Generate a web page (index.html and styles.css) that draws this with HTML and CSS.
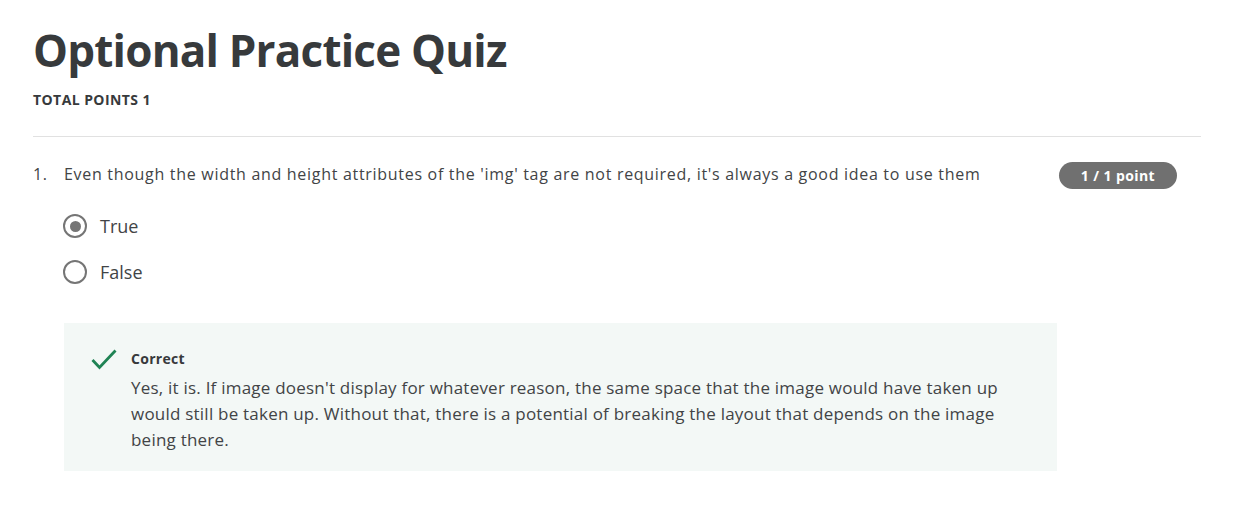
FILE: index.html
```html
<!DOCTYPE html>
<html>
<head>
<meta charset="utf-8">
<link rel="stylesheet" href="styles.css">
</head>
<body>
<main class="page">
  <h1 class="title">Optional Practice Quiz</h1>
  <div class="total">TOTAL POINTS 1</div>
  <hr class="divider">
  <section class="question">
    <div class="q-head">
      <span class="q-num">1.</span>
      <span class="q-text">Even though the width and height attributes of the 'img' tag are not required, it's always a good idea to use them</span>
      <span class="badge">1 / 1 point</span>
    </div>
    <div class="options">
      <label class="option"><span class="radio checked"></span><span class="opt-label">True</span></label>
      <label class="option"><span class="radio"></span><span class="opt-label">False</span></label>
    </div>
    <div class="feedback">
      <svg class="check" width="26" height="21" viewBox="0 0 26 21"><path d="M1.5 11 L8.5 18.5 L24.5 1.5" fill="none" stroke="#1f8354" stroke-width="2.8"/></svg>
      <div class="fb-body">
        <div class="fb-title">Correct</div>
        <p class="fb-text">Yes, it is. If image doesn't display for whatever reason, the same space that the image would have taken up would still be taken up. Without that, there is a potential of breaking the layout that depends on the image being there.</p>
      </div>
    </div>
  </section>
</main>
</body>
</html>
```
FILE: styles.css
```css
* { box-sizing: border-box; }
body {
  margin: 0;
  background: #fff;
  font-family: "Open Sans", "Liberation Sans", sans-serif;
  color: #424446;
}
.page {
  padding: 20px 51px 0 33px;
}
.title {
  margin: 0;
  font-size: 44px;
  font-weight: 700;
  line-height: 60px;
  letter-spacing: -0.8px;
  color: #373a3c;
}
.total {
  margin-top: 10px;
  font-size: 14px;
  font-weight: 700;
  line-height: 20px;
  letter-spacing: 0.43px;
  color: #373a3c;
}
.divider {
  margin: 26px 0 0 0;
  border: 0;
  border-top: 1px solid #e1e1e1;
}
.question {
  padding-top: 25px;
}
.q-head {
  display: flex;
  align-items: flex-start;
  font-size: 16px;
  line-height: 24px;
  letter-spacing: 0.7px;
}
.q-num {
  width: 31px;
  flex: none;
}
.q-text {
  flex: 1;
}
.badge {
  flex: none;
  margin: 0 24px 0 40px;
  background: #707070;
  color: #fff;
  font-size: 14px;
  font-weight: 700;
  line-height: 27px;
  height: 27px;
  padding: 0 22px;
  letter-spacing: 0.4px;
  border-radius: 14px;
}
.options {
  display: flex;
  flex-direction: column;
  gap: 22px;
  margin: 25px 0 0 30px;
}
.option {
  display: flex;
  align-items: center;
  gap: 13px;
  font-size: 18px;
  line-height: 24px;
}
.radio {
  width: 24px;
  height: 24px;
  border: 2.5px solid #757575;
  border-radius: 50%;
  display: flex;
  align-items: center;
  justify-content: center;
}
.radio.checked::after {
  content: "";
  width: 11px;
  height: 11px;
  border-radius: 50%;
  background: #757575;
}
.feedback {
  margin: 39px 0 0 31px;
  width: 993px;
  height: 148px;
  background: #f3f8f6;
  display: flex;
  padding: 26px 37px 0 27px;
  gap: 14px;
}
.check {
  flex: none;
}
.fb-title {
  font-size: 14px;
  font-weight: 700;
  line-height: 20px;
  letter-spacing: 0.3px;
  color: #373a3c;
}
.fb-text {
  margin: 6px 0 0 0;
  font-size: 17px;
  line-height: 26px;
  letter-spacing: 0.22px;
}
```
